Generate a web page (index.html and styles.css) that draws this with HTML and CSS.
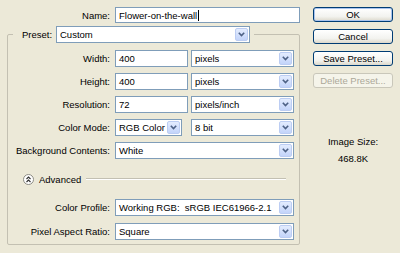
FILE: index.html
```html
<!DOCTYPE html>
<html lang="en">
<head>
    <meta charset="UTF-8">
    <title>New</title>
    <link rel="stylesheet" href="styles.css">
</head>
<body>
    <div class="dialog">
        <!-- Left: fields -->
        <div class="main">
            <div class="name-row">
                <label class="lbl">Name:</label>
                <div class="field name-field">Flower-on-the-wall<span class="caret"></span></div>
            </div>

            <fieldset class="group">
                <legend class="preset">
                    <label class="preset-lbl">Preset:</label>
                    <div class="combo w-preset"><span class="val">Custom</span><span class="drop"><svg width="7" height="5" viewBox="0 0 7 5"><path d="M0.8 0.8 L3.5 3.6 L6.2 0.8" /></svg></span></div>
                </legend>

                <div class="row first">
                    <label class="lbl">Width:</label>
                    <div class="field w-num">400</div>
                    <div class="combo w-unit"><span class="val">pixels</span><span class="drop"><svg width="7" height="5" viewBox="0 0 7 5"><path d="M0.8 0.8 L3.5 3.6 L6.2 0.8" /></svg></span></div>
                </div>
                <div class="row">
                    <label class="lbl">Height:</label>
                    <div class="field w-num">400</div>
                    <div class="combo w-unit"><span class="val">pixels</span><span class="drop"><svg width="7" height="5" viewBox="0 0 7 5"><path d="M0.8 0.8 L3.5 3.6 L6.2 0.8" /></svg></span></div>
                </div>
                <div class="row">
                    <label class="lbl">Resolution:</label>
                    <div class="field w-num">72</div>
                    <div class="combo w-unit"><span class="val">pixels/inch</span><span class="drop"><svg width="7" height="5" viewBox="0 0 7 5"><path d="M0.8 0.8 L3.5 3.6 L6.2 0.8" /></svg></span></div>
                </div>
                <div class="row">
                    <label class="lbl">Color Mode:</label>
                    <div class="combo w-mode"><span class="val">RGB Color</span><span class="drop"><svg width="7" height="5" viewBox="0 0 7 5"><path d="M0.8 0.8 L3.5 3.6 L6.2 0.8" /></svg></span></div>
                    <div class="combo w-bits"><span class="val">8 bit</span><span class="drop"><svg width="7" height="5" viewBox="0 0 7 5"><path d="M0.8 0.8 L3.5 3.6 L6.2 0.8" /></svg></span></div>
                </div>
                <div class="row">
                    <label class="lbl">Background Contents:</label>
                    <div class="combo w-full"><span class="val">White</span><span class="drop"><svg width="7" height="5" viewBox="0 0 7 5"><path d="M0.8 0.8 L3.5 3.6 L6.2 0.8" /></svg></span></div>
                </div>

                <div class="advanced">
                    <span class="adv-btn">
                        <svg width="11" height="11" viewBox="0 0 11 11">
                            <circle cx="5.5" cy="5.5" r="5" fill="#fff" stroke="#8d8c84" />
                            <path d="M3.5 5 L5.5 3 L7.5 5 M3.5 8 L5.5 6 L7.5 8" fill="none" stroke="#2f2f2f" stroke-width="1.1" />
                        </svg>
                    </span>
                    <span class="adv-text">Advanced</span>
                    <span class="rule"></span>
                </div>

                <div class="row after-adv">
                    <label class="lbl">Color Profile:</label>
                    <div class="combo w-full"><span class="val">Working RGB:&nbsp; sRGB IEC61966-2.1</span><span class="drop"><svg width="7" height="5" viewBox="0 0 7 5"><path d="M0.8 0.8 L3.5 3.6 L6.2 0.8" /></svg></span></div>
                </div>
                <div class="row last">
                    <label class="lbl">Pixel Aspect Ratio:</label>
                    <div class="combo w-full"><span class="val">Square</span><span class="drop"><svg width="7" height="5" viewBox="0 0 7 5"><path d="M0.8 0.8 L3.5 3.6 L6.2 0.8" /></svg></span></div>
                </div>
            </fieldset>
        </div>

        <!-- Right: buttons -->
        <div class="side">
            <button class="btn default">OK</button>
            <button class="btn">Cancel</button>
            <button class="btn">Save Preset...</button>
            <button class="btn" disabled>Delete Preset...</button>

            <div class="size">
                <p>Image Size:</p>
                <p class="size-val">468.8K</p>
            </div>
        </div>
    </div>
</body>
</html>
```

FILE: styles.css
```css
:root {
    --dialog-bg: #ece9d8;
    --field-border: #7f9db9;
    --group-border: #c3c0b2;
    --btn-border: #003c74;
}

* {
    box-sizing: border-box;
}

body {
    margin: 0;
    background: var(--dialog-bg);
    font-family: 'Liberation Sans', Arial, sans-serif;
    font-size: 9.5px;
    color: #000;
}

.dialog {
    display: flex;
    width: 400px;
    height: 253px;
    padding: 7px 0 0 7px;
}

.main {
    width: 293px;
}

/* labels + fields */

.lbl {
    flex: none;
    width: 103px;
    margin-right: 5px;
    text-align: right;
    white-space: nowrap;
}

.name-row {
    display: flex;
    align-items: center;
    height: 16px;
}

.field,
.combo {
    display: flex;
    align-items: center;
    flex: none;
    height: 17px;
    background: #fff;
    border: 1px solid var(--field-border);
    white-space: nowrap;
}

.field {
    padding-left: 3px;
}

.name-field {
    width: 185px;
    height: 16px;
}

.caret {
    display: inline-block;
    width: 1px;
    height: 11px;
    margin-left: 1px;
    background: #000;
}

.combo .val {
    flex: 1;
    padding-left: 3px;
    overflow: hidden;
}

.drop {
    display: flex;
    align-items: center;
    justify-content: center;
    width: 13px;
    height: 13px;
    margin: 1px;
    border: 1px solid #bccdf3;
    border-radius: 2px;
    background: linear-gradient(#e3ecfe, #c3d4fa);
}

.drop path {
    fill: none;
    stroke: #4d6185;
    stroke-width: 1.6;
}

.w-num { width: 73px; }
.w-unit { width: 103px; margin-left: 3px; }
.w-mode { width: 67px; }
.w-bits { width: 103px; margin-left: 9px; }
.w-full { width: 179px; }
.w-preset { width: 194px; }

/* group box */

.group {
    min-width: 0;
    width: 293px;
    margin: 3px 0 0;
    padding: 0 5px 4px 0;
    border: 1px solid var(--group-border);
    border-radius: 2px;
}

.preset {
    display: flex;
    align-items: center;
    margin-left: 5px;
    padding: 0 4px 0 9px;
}

.preset-lbl {
    width: 34px;
}

.group .lbl {
    width: 102px;
}

.row {
    display: flex;
    align-items: center;
    height: 17px;
    margin-top: 6px;
}

.row.first {
    margin-top: 7px;
}

.row.after-adv {
    margin-top: 14px;
}

.row.last {
    margin-top: 7px;
}

.advanced {
    display: flex;
    align-items: center;
    height: 12px;
    margin-top: 14px;
}

.adv-btn {
    display: flex;
    margin-left: 15px;
}

.adv-text {
    margin-left: 5px;
}

.rule {
    flex: 1;
    margin: 0 8px 0 5px;
    border-top: 1px solid var(--group-border);
    border-bottom: 1px solid #fff;
}

/* right column */

.side {
    display: flex;
    flex-direction: column;
    width: 80px;
    margin-left: 13px;
}

.btn {
    height: 15px;
    margin: 0 0 7px;
    padding: 0;
    font: inherit;
    color: #000;
    border: 1px solid var(--btn-border);
    border-radius: 3px;
    background: linear-gradient(#ffffff 0%, #f3f3ef 65%, #dcd8cb 100%);
}

.btn.default {
    box-shadow: inset 0 0 0 1px #a9c4ee;
}

.btn:disabled {
    color: #aca899;
    border-color: #c9c7ba;
    background: #f5f4ea;
}

.size {
    margin-top: 41px;
    text-align: center;
}

.size p {
    margin: 0;
    line-height: 12px;
}

.size .size-val {
    margin-top: 5px;
}
```
